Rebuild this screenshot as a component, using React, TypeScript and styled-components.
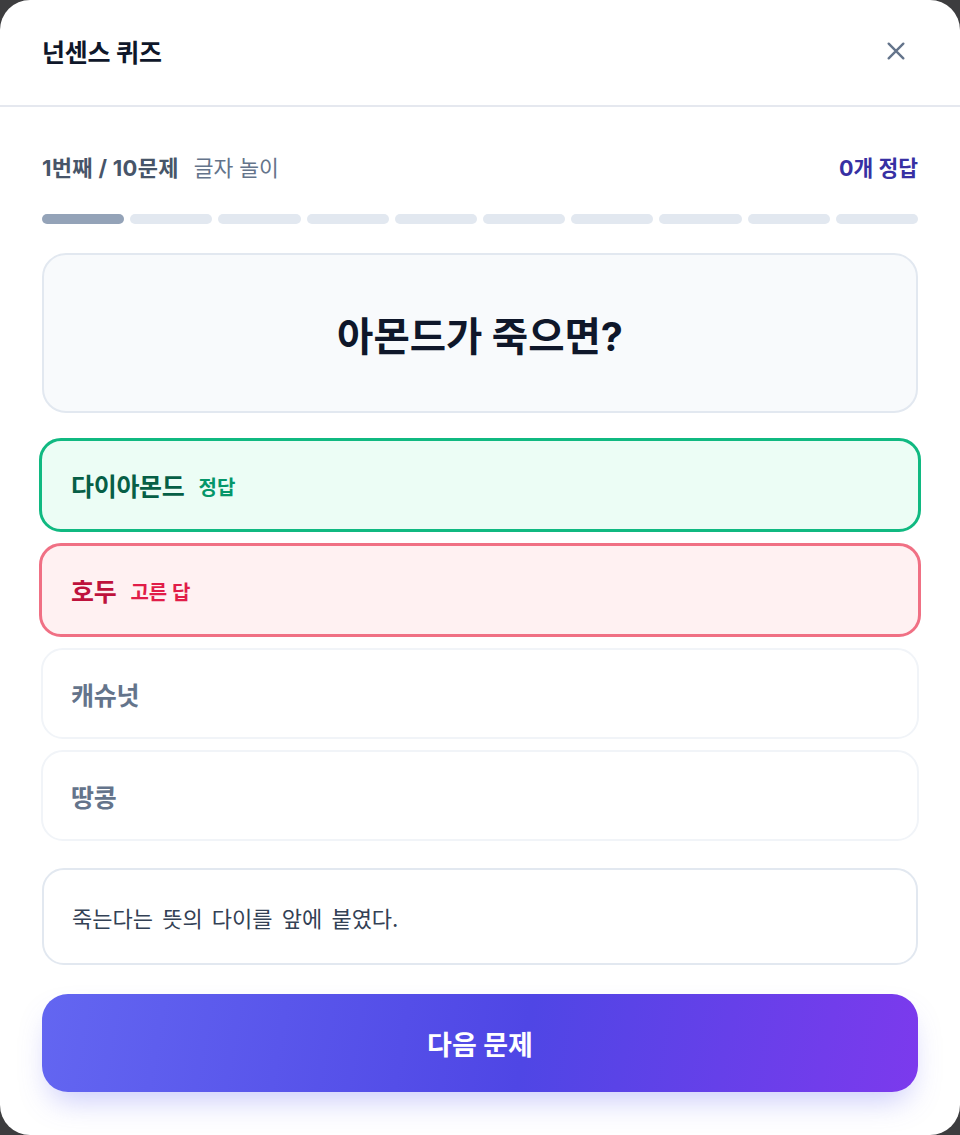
import styled, { createGlobalStyle } from "styled-components";

const GlobalStyle = createGlobalStyle`
  html, body {
    margin: 0;
    padding: 0;
    background: #3d3d3f;
  }
  body {
    font-family: "Inter", "Noto Sans CJK KR", sans-serif;
    -webkit-font-smoothing: antialiased;
  }
  * { box-sizing: border-box; }
`;

const Modal = styled.div`
  width: 960px;
  height: 1135px;
  background: #ffffff;
  border-radius: 30px;
  overflow: hidden;
  display: flex;
  flex-direction: column;
`;

const Header = styled.header`
  height: 107px;
  border-bottom: 2px solid #e5e8ef;
  display: flex;
  align-items: center;
  justify-content: space-between;
  padding: 0 50px 4px 42px;
`;

const Title = styled.h1`
  margin: 0;
  font-size: 25px;
  font-weight: 700;
  color: #0f172a;
  letter-spacing: -0.2px;
`;

const CloseButton = styled.button`
  border: 0;
  background: none;
  padding: 0;
  width: 28px;
  height: 28px;
  color: #64748b;
  display: flex;
  align-items: center;
  justify-content: center;
  cursor: pointer;
`;

const Body = styled.div`
  padding: 44px 42px 0 42px;
  display: flex;
  flex-direction: column;
`;

const MetaRow = styled.div`
  display: flex;
  align-items: center;
  justify-content: space-between;
  height: 30px;
`;

const Meta = styled.div`
  display: flex;
  align-items: baseline;
  gap: 15px;
`;

const Count = styled.span`
  font-size: 22px;
  font-weight: 700;
  color: #475569;
  letter-spacing: 0.3px;
`;

const Category = styled.span`
  font-size: 21.5px;
  font-weight: 400;
  color: #64748b;
`;

const Score = styled.span`
  font-size: 21.5px;
  font-weight: 700;
  color: #3730a3;
`;

const Progress = styled.div`
  display: grid;
  grid-template-columns: repeat(10, 1fr);
  gap: 6px;
  margin-top: 33px;
`;

const Segment = styled.div<{ $active?: boolean }>`
  height: 10px;
  border-radius: 5px;
  background: ${(p) => (p.$active ? "#94a3b8" : "#e2e8f0")};
`;

const QuestionCard = styled.div`
  margin-top: 29px;
  height: 160px;
  border: 2px solid #e2e8f0;
  border-radius: 24px;
  background: #f8fafc;
  display: flex;
  align-items: center;
  justify-content: center;
`;

const Question = styled.h2`
  margin: 0;
  font-size: 39.5px;
  font-weight: 700;
  color: #0f172a;
`;

const Options = styled.div`
  margin-top: 25px;
  display: flex;
  flex-direction: column;
  gap: 11px;
`;

type Tone = "correct" | "wrong" | "idle";

const toneStyle = {
  correct: { bg: "#ecfdf5", border: "#10b981", text: "#065f46", tag: "#059669" },
  wrong: { bg: "#fff1f2", border: "#f07084", text: "#be123c", tag: "#e11d48" },
  idle: { bg: "#ffffff", border: "#f1f4f8", text: "#64748b", tag: "#64748b" },
};

const Option = styled.div<{ $tone: Tone }>`
  height: ${(p) => (p.$tone === "idle" ? "91px" : "94px")};
  margin: ${(p) => (p.$tone === "idle" ? "0 -1px" : "0 -3px")};
  border: ${(p) => (p.$tone === "idle" ? "2px" : "3px")} solid
    ${(p) => toneStyle[p.$tone].border};
  border-radius: 22px;
  background: ${(p) => toneStyle[p.$tone].bg};
  display: flex;
  align-items: center;
  gap: 14px;
  padding: 0 0 0 ${(p) => (p.$tone === "idle" ? "28px" : "29px")};
`;

const OptionLabel = styled.span<{ $tone: Tone }>`
  font-size: 25px;
  font-weight: 700;
  color: ${(p) => toneStyle[p.$tone].text};
  letter-spacing: -0.3px;
`;

const OptionTag = styled.span<{ $tone: Tone }>`
  font-size: 20px;
  font-weight: 700;
  color: ${(p) => toneStyle[p.$tone].tag};
  padding-top: 3px;
`;

const Explanation = styled.div`
  margin-top: 27px;
  height: 97px;
  border: 2px solid #e2e8f0;
  border-radius: 22px;
  display: flex;
  align-items: center;
  padding: 0 28px;
  font-size: 22px;
  word-spacing: 3px;
  color: #334155;
`;

const NextButton = styled.button`
  margin-top: 29px;
  height: 98px;
  border: 0;
  border-radius: 26px;
  background: linear-gradient(100deg, #6366f1 0%, #4f46e5 55%, #7c3aed 100%);
  box-shadow: 0 16px 30px -8px rgba(99, 102, 241, 0.35);
  color: #ffffff;
  font-family: inherit;
  font-size: 27px;
  font-weight: 700;
  cursor: pointer;
`;

const options: { label: string; tone: Tone; tag?: string }[] = [
  { label: "다이아몬드", tone: "correct", tag: "정답" },
  { label: "호두", tone: "wrong", tag: "고른 답" },
  { label: "캐슈넛", tone: "idle" },
  { label: "땅콩", tone: "idle" },
];

export default function App() {
  return (
    <>
      <GlobalStyle />
      <Modal>
        <Header>
          <Title>넌센스 퀴즈</Title>
          <CloseButton aria-label="닫기">
            <svg width="22" height="22" viewBox="0 0 24 24" fill="none" stroke="currentColor" strokeWidth="2.6" strokeLinecap="round">
              <path d="M4 4l16 16M20 4L4 20" />
            </svg>
          </CloseButton>
        </Header>
        <Body>
          <MetaRow>
            <Meta>
              <Count>1번째 / 10문제</Count>
              <Category>글자 놀이</Category>
            </Meta>
            <Score>0개 정답</Score>
          </MetaRow>
          <Progress>
            {Array.from({ length: 10 }).map((_, i) => (
              <Segment key={i} $active={i === 0} />
            ))}
          </Progress>
          <QuestionCard>
            <Question>아몬드가 죽으면?</Question>
          </QuestionCard>
          <Options>
            {options.map((o) => (
              <Option key={o.label} $tone={o.tone}>
                <OptionLabel $tone={o.tone}>{o.label}</OptionLabel>
                {o.tag && <OptionTag $tone={o.tone}>{o.tag}</OptionTag>}
              </Option>
            ))}
          </Options>
          <Explanation>죽는다는 뜻의 다이를 앞에 붙였다.</Explanation>
          <NextButton>다음 문제</NextButton>
        </Body>
      </Modal>
    </>
  );
}
